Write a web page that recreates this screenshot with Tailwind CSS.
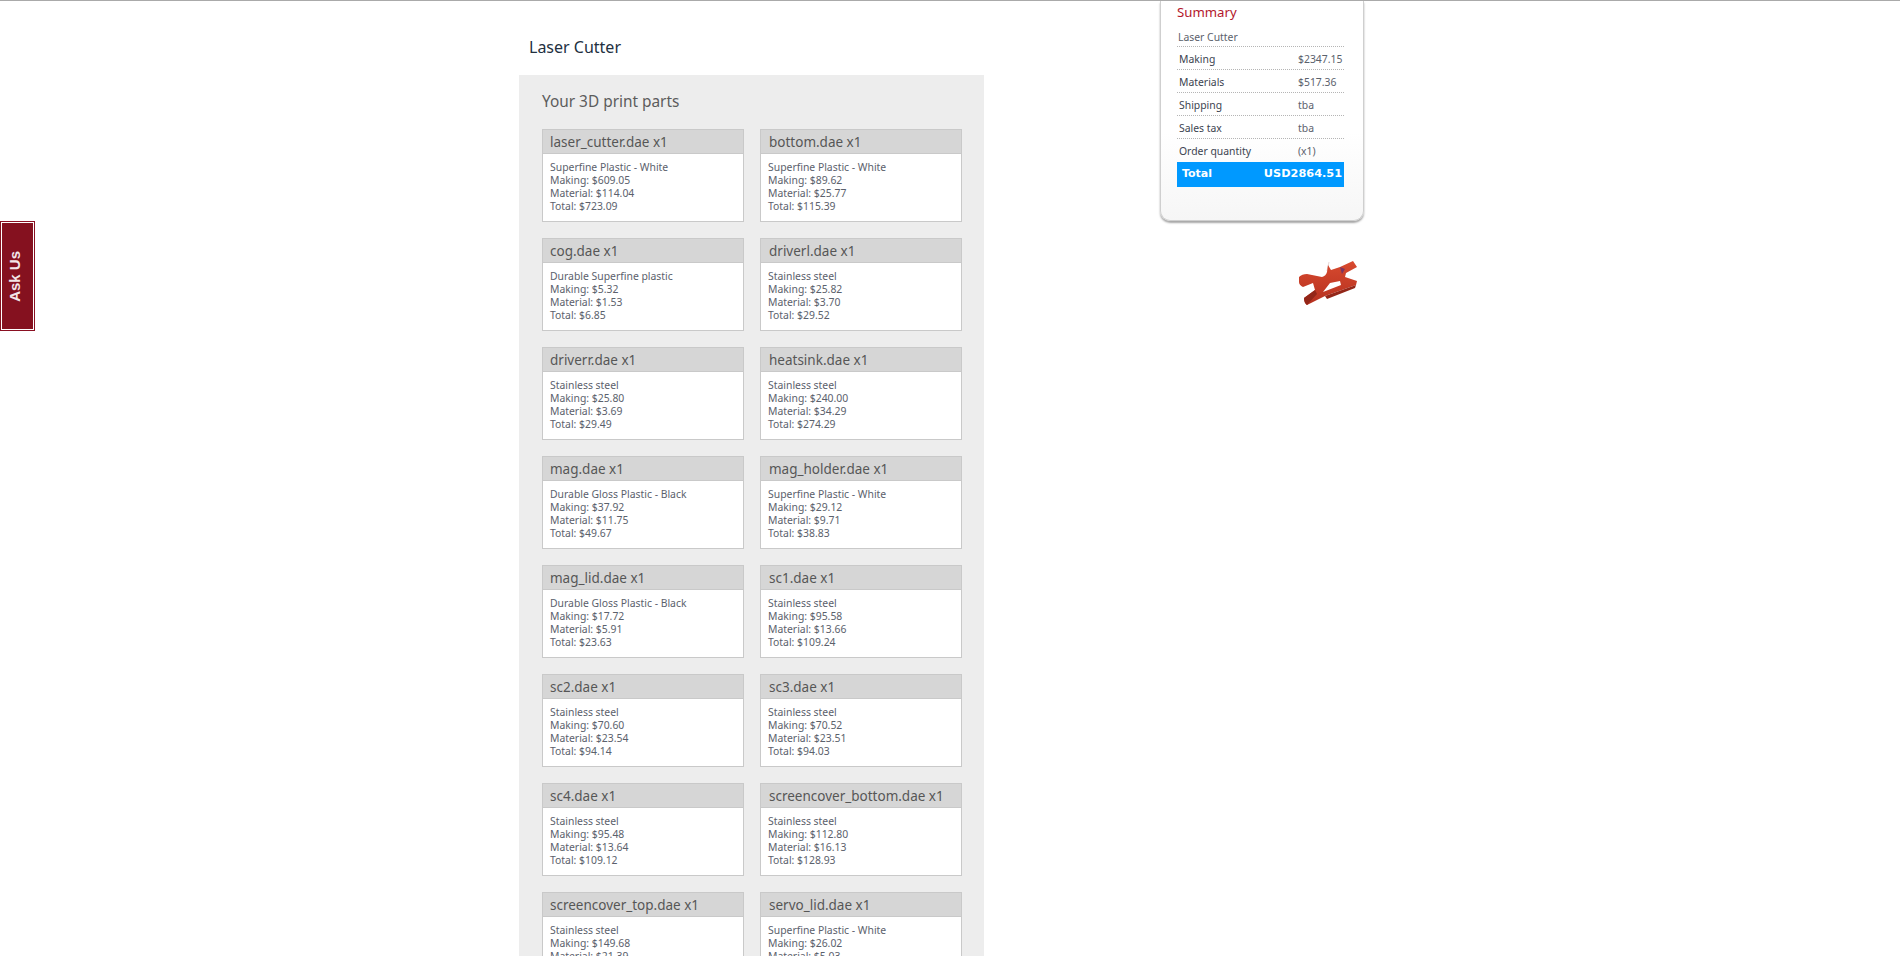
<!DOCTYPE html>
<html><head><meta charset="utf-8"><title>Laser Cutter</title>
<script src="https://cdn.jsdelivr.net/npm/@tailwindcss/browser@4"></script></head>
<body class="h-[956px] overflow-hidden bg-white font-['Noto_Sans',sans-serif]">
<div class="relative h-[956px] overflow-hidden border-t border-[#aaaaaa]">

<a class="absolute left-0 top-[220px] flex h-[110px] w-[35px] items-center justify-center border border-l-0 border-[#8a1022] bg-[#85111f] pr-[3px] outline outline-1 -outline-offset-2 outline-white">
  <span class="rotate-180 font-['Liberation_Sans',sans-serif] text-[15px] font-bold text-[#f3e6e8] [writing-mode:vertical-rl]">Ask Us</span>
</a>

<div class="ml-[519px] flex items-start">
  <main class="w-[465px]">
    <h1 class="h-[74px] pl-[10px] pt-[34px] text-[16px] leading-[24px] text-[#22303f]">Laser Cutter</h1>
    <section class="bg-[#ededed] px-[23px] pt-[15px] pb-[20px]">
      <h2 class="h-[39px] text-[15.4px] leading-[24px] text-[#5c5c5c]">Your 3D print parts</h2>
      <div class="grid grid-cols-[202px_202px] gap-x-[16px] gap-y-[16px] text-[#5b616c]">

        <article class="h-[93px] border border-[#c9c9c9] bg-white"><h3 class="h-[24px] border-b border-[#c9c9c9] bg-[#d6d6d6] px-[7px] text-[13.5px] leading-[24px] text-[#565656]">laser_cutter.dae x1</h3><div class="px-[7px] pt-[7px] text-[10.4px] leading-[13px]"><p>Superfine Plastic - White</p><p>Making: $609.05</p><p>Material: $114.04</p><p>Total: $723.09</p></div></article>
        <article class="h-[93px] border border-[#c9c9c9] bg-white"><h3 class="h-[24px] border-b border-[#c9c9c9] bg-[#d6d6d6] px-[8px] text-[13.5px] leading-[24px] text-[#565656]">bottom.dae x1</h3><div class="px-[7px] pt-[7px] text-[10.4px] leading-[13px]"><p>Superfine Plastic - White</p><p>Making: $89.62</p><p>Material: $25.77</p><p>Total: $115.39</p></div></article>

        <article class="h-[93px] border border-[#c9c9c9] bg-white"><h3 class="h-[24px] border-b border-[#c9c9c9] bg-[#d6d6d6] px-[7px] text-[13.5px] leading-[24px] text-[#565656]">cog.dae x1</h3><div class="px-[7px] pt-[7px] text-[10.4px] leading-[13px]"><p>Durable Superfine plastic</p><p>Making: $5.32</p><p>Material: $1.53</p><p>Total: $6.85</p></div></article>
        <article class="h-[93px] border border-[#c9c9c9] bg-white"><h3 class="h-[24px] border-b border-[#c9c9c9] bg-[#d6d6d6] px-[8px] text-[13.5px] leading-[24px] text-[#565656]">driverl.dae x1</h3><div class="px-[7px] pt-[7px] text-[10.4px] leading-[13px]"><p>Stainless steel</p><p>Making: $25.82</p><p>Material: $3.70</p><p>Total: $29.52</p></div></article>

        <article class="h-[93px] border border-[#c9c9c9] bg-white"><h3 class="h-[24px] border-b border-[#c9c9c9] bg-[#d6d6d6] px-[7px] text-[13.5px] leading-[24px] text-[#565656]">driverr.dae x1</h3><div class="px-[7px] pt-[7px] text-[10.4px] leading-[13px]"><p>Stainless steel</p><p>Making: $25.80</p><p>Material: $3.69</p><p>Total: $29.49</p></div></article>
        <article class="h-[93px] border border-[#c9c9c9] bg-white"><h3 class="h-[24px] border-b border-[#c9c9c9] bg-[#d6d6d6] px-[8px] text-[13.5px] leading-[24px] text-[#565656]">heatsink.dae x1</h3><div class="px-[7px] pt-[7px] text-[10.4px] leading-[13px]"><p>Stainless steel</p><p>Making: $240.00</p><p>Material: $34.29</p><p>Total: $274.29</p></div></article>

        <article class="h-[93px] border border-[#c9c9c9] bg-white"><h3 class="h-[24px] border-b border-[#c9c9c9] bg-[#d6d6d6] px-[7px] text-[13.5px] leading-[24px] text-[#565656]">mag.dae x1</h3><div class="px-[7px] pt-[7px] text-[10.4px] leading-[13px]"><p>Durable Gloss Plastic - Black</p><p>Making: $37.92</p><p>Material: $11.75</p><p>Total: $49.67</p></div></article>
        <article class="h-[93px] border border-[#c9c9c9] bg-white"><h3 class="h-[24px] border-b border-[#c9c9c9] bg-[#d6d6d6] px-[8px] text-[13.5px] leading-[24px] text-[#565656]">mag_holder.dae x1</h3><div class="px-[7px] pt-[7px] text-[10.4px] leading-[13px]"><p>Superfine Plastic - White</p><p>Making: $29.12</p><p>Material: $9.71</p><p>Total: $38.83</p></div></article>

        <article class="h-[93px] border border-[#c9c9c9] bg-white"><h3 class="h-[24px] border-b border-[#c9c9c9] bg-[#d6d6d6] px-[7px] text-[13.5px] leading-[24px] text-[#565656]">mag_lid.dae x1</h3><div class="px-[7px] pt-[7px] text-[10.4px] leading-[13px]"><p>Durable Gloss Plastic - Black</p><p>Making: $17.72</p><p>Material: $5.91</p><p>Total: $23.63</p></div></article>
        <article class="h-[93px] border border-[#c9c9c9] bg-white"><h3 class="h-[24px] border-b border-[#c9c9c9] bg-[#d6d6d6] px-[8px] text-[13.5px] leading-[24px] text-[#565656]">sc1.dae x1</h3><div class="px-[7px] pt-[7px] text-[10.4px] leading-[13px]"><p>Stainless steel</p><p>Making: $95.58</p><p>Material: $13.66</p><p>Total: $109.24</p></div></article>

        <article class="h-[93px] border border-[#c9c9c9] bg-white"><h3 class="h-[24px] border-b border-[#c9c9c9] bg-[#d6d6d6] px-[7px] text-[13.5px] leading-[24px] text-[#565656]">sc2.dae x1</h3><div class="px-[7px] pt-[7px] text-[10.4px] leading-[13px]"><p>Stainless steel</p><p>Making: $70.60</p><p>Material: $23.54</p><p>Total: $94.14</p></div></article>
        <article class="h-[93px] border border-[#c9c9c9] bg-white"><h3 class="h-[24px] border-b border-[#c9c9c9] bg-[#d6d6d6] px-[8px] text-[13.5px] leading-[24px] text-[#565656]">sc3.dae x1</h3><div class="px-[7px] pt-[7px] text-[10.4px] leading-[13px]"><p>Stainless steel</p><p>Making: $70.52</p><p>Material: $23.51</p><p>Total: $94.03</p></div></article>

        <article class="h-[93px] border border-[#c9c9c9] bg-white"><h3 class="h-[24px] border-b border-[#c9c9c9] bg-[#d6d6d6] px-[7px] text-[13.5px] leading-[24px] text-[#565656]">sc4.dae x1</h3><div class="px-[7px] pt-[7px] text-[10.4px] leading-[13px]"><p>Stainless steel</p><p>Making: $95.48</p><p>Material: $13.64</p><p>Total: $109.12</p></div></article>
        <article class="h-[93px] border border-[#c9c9c9] bg-white"><h3 class="h-[24px] border-b border-[#c9c9c9] bg-[#d6d6d6] px-[8px] text-[13.5px] leading-[24px] text-[#565656]">screencover_bottom.dae x1</h3><div class="px-[7px] pt-[7px] text-[10.4px] leading-[13px]"><p>Stainless steel</p><p>Making: $112.80</p><p>Material: $16.13</p><p>Total: $128.93</p></div></article>

        <article class="h-[93px] border border-[#c9c9c9] bg-white"><h3 class="h-[24px] border-b border-[#c9c9c9] bg-[#d6d6d6] px-[7px] text-[13.5px] leading-[24px] text-[#565656]">screencover_top.dae x1</h3><div class="px-[7px] pt-[7px] text-[10.4px] leading-[13px]"><p>Stainless steel</p><p>Making: $149.68</p><p>Material: $21.39</p><p>Total: $171.07</p></div></article>
        <article class="h-[93px] border border-[#c9c9c9] bg-white"><h3 class="h-[24px] border-b border-[#c9c9c9] bg-[#d6d6d6] px-[8px] text-[13.5px] leading-[24px] text-[#565656]">servo_lid.dae x1</h3><div class="px-[7px] pt-[7px] text-[10.4px] leading-[13px]"><p>Superfine Plastic - White</p><p>Making: $26.02</p><p>Material: $5.03</p><p>Total: $31.05</p></div></article>
      </div>
    </section>
  </main>

  <aside class="ml-[176px] w-[204px]">
    <div class="h-[220px] rounded-b-[10px] border-x border-b border-[#cfcfcf] bg-gradient-to-b from-white from-60% to-[#f6f6f6] pl-[16px] pr-[19px] shadow-[0_2px_2px_rgba(0,0,0,0.35)]">
      <h2 class="h-[23px] text-[13.2px] leading-[22px] text-[#b3162c]">Summary</h2>
      <div class="h-[23px] border-b border-dotted border-[#b5b5b5] pl-[1px] text-[10.4px] leading-[26px] text-[#5b616c]">Laser Cutter</div>
      <div class="flex h-[23px] border-b border-dotted border-[#b5b5b5] text-[10.4px] leading-[24px] text-[#3b4350]"><span class="w-[121px] pl-[2px]">Making</span><span class="text-[#5b616c]">$2347.15</span></div>
      <div class="flex h-[23px] border-b border-dotted border-[#b5b5b5] text-[10.4px] leading-[24px] text-[#3b4350]"><span class="w-[121px] pl-[2px]">Materials</span><span class="text-[#5b616c]">$517.36</span></div>
      <div class="flex h-[23px] border-b border-dotted border-[#b5b5b5] text-[10.4px] leading-[24px] text-[#3b4350]"><span class="w-[121px] pl-[2px]">Shipping</span><span class="text-[#5b616c]">tba</span></div>
      <div class="flex h-[23px] border-b border-dotted border-[#b5b5b5] text-[10.4px] leading-[24px] text-[#3b4350]"><span class="w-[121px] pl-[2px]">Sales tax</span><span class="text-[#5b616c]">tba</span></div>
      <div class="flex h-[23px] text-[10.4px] leading-[24px] text-[#3b4350]"><span class="w-[121px] pl-[2px]">Order quantity</span><span class="text-[#5b616c]">(x1)</span></div>
      <div class="flex h-[25px] items-center justify-between bg-[#0099ff] pl-[5px] pr-[2px] font-['DejaVu_Sans',sans-serif] font-bold text-white"><span class="text-[11px]">Total</span><span class="text-[11.3px]">USD2864.51</span></div>
    </div>
    <svg class="ml-[138px] mt-[38px]" width="62" height="48" viewBox="18 10 62 48" role="img" aria-label="Laser cutter part">
      <defs><linearGradient id="part" x1="0" y1="0" x2="0" y2="1"><stop offset="0" stop-color="#d84a2f"/><stop offset="1" stop-color="#b5301f"/></linearGradient></defs>
      <path d="M49 13 L47 22" stroke="#e8d8d8" stroke-width="1" fill="none"/>
      <path fill-rule="evenodd" fill="url(#part)" d="M19 28 Q22 25 27 25 L42 28 Q46 27 47 23 L48 16 L51 21 L60 18 L73 12 L77 18 L66 24 L65 28 L77 32 L76 36 L45 47 L27 56 Q24 54 24 49 L35 41 L33 34 L23 38 Q19 36 19 33 Z M43 43 L50 34 L60 32 L61 36 Z"/>
      <path d="M60 18 L65 20 L62 25 Z" fill="#7c3560"/>
      <path d="M27 56 Q24 54 24 49 L35 41 L37 45 Z M45 47 L76 36 L75 39 L47 50 Z" fill="#932618"/>
    </svg>
  </aside>
</div>
</div>
</body></html>
